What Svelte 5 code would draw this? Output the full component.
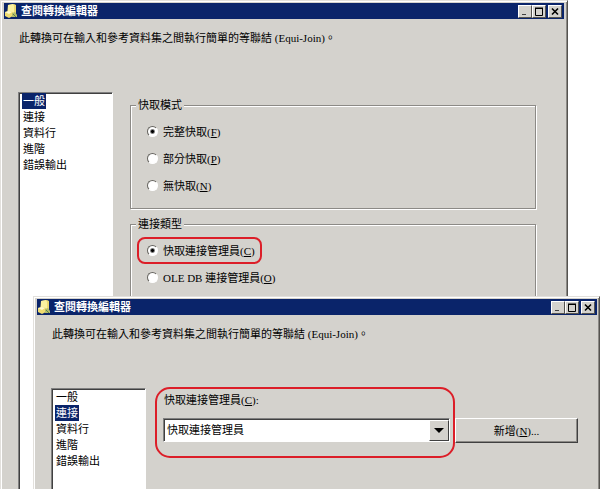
<script lang="ts">
    const pages = ['一般', '連接', '資料行', '進階', '錯誤輸出'];

    const cacheModes = [
        { value: 'full', text: '完整快取', key: 'F' },
        { value: 'partial', text: '部分快取', key: 'P' },
        { value: 'none', text: '無快取', key: 'N' },
    ];

    const connectionTypes = [
        { value: 'cache', text: '快取連接管理員', key: 'C' },
        { value: 'oledb', text: 'OLE DB 連接管理員', key: 'O' },
    ];

    let cacheMode = $state('full');
    let connectionType = $state('cache');
    let backPage = $state('一般');
    let frontPage = $state('連接');
    let manager = $state('快取連接管理員');
</script>

{#snippet titleBar()}
    <header class="title-bar">
        <svg class="app-icon" viewBox="0 0 14 14" aria-hidden="true">
            <path d="M4 1L10 0L12 1V10L9 12L3 11Z" fill="#ecd970" />
            <path d="M4 1L9 0L10 2V9L4 10Z" fill="#fbf2a0" />
            <path d="M1 8L5 7L9 8V12L5 14L1 12Z" fill="#f0dc70" />
            <path d="M1 8L5 7L8 8L5 10Z" fill="#fffbd0" />
            <path d="M8 9L11 8L13 11V13H8Z" fill="#b4bc68" />
            <path d="M9 10L12 13" fill="none" stroke="#5c8050" />
        </svg>
        <h1>查閱轉換編輯器</h1>
        <button class="caption" aria-label="最小化">
            <svg viewBox="0 0 10 9"><path d="M2 7.5H6" stroke="#404040" /></svg>
        </button>
        <button class="caption" aria-label="最大化">
            <svg viewBox="0 0 10 9"><path d="M1.5 1V8.5H8.5V1M1 1H9" fill="none" stroke="#000" /><path d="M1 1.5H9" stroke="#000" /></svg>
        </button>
        <button class="caption close" aria-label="關閉">
            <svg viewBox="0 0 10 9"><path d="M2 1.5L8 7.5M8 1.5L2 7.5" stroke="#000" stroke-width="1.6" /></svg>
        </button>
    </header>
    <p class="intro">此轉換可在輸入和參考資料集之間執行簡單的等聯結 (Equi-Join)。</p>
{/snippet}

{#snippet pageList(current: string, select: (page: string) => void)}
    <nav class="pages">
        {#each pages as page}
            <button class:selected={page === current} onclick={() => select(page)}>{page}</button>
        {/each}
    </nav>
{/snippet}

<main class="desktop">
    <section class="window back">
        {@render titleBar()}
        <div class="body">
            {@render pageList(backPage, (page) => (backPage = page))}
            <div class="groups">
                <fieldset>
                    <legend>快取模式</legend>
                    {#each cacheModes as mode}
                        <label class="choice">
                            <input type="radio" name="mode" value={mode.value} bind:group={cacheMode} />
                            <span>{mode.text}(<u>{mode.key}</u>)</span>
                        </label>
                    {/each}
                </fieldset>
                <fieldset>
                    <legend>連接類型</legend>
                    {#each connectionTypes as type}
                        <label class="choice" class:marked={type.value === 'cache'}>
                            <input type="radio" name="type" value={type.value} bind:group={connectionType} />
                            <span>{type.text}(<u>{type.key}</u>)</span>
                        </label>
                    {/each}
                </fieldset>
            </div>
        </div>
    </section>

    <section class="window front">
        {@render titleBar()}
        <div class="body">
            {@render pageList(frontPage, (page) => (frontPage = page))}
            <div class="connection">
                <div class="manager">
                    <label for="manager">快取連接管理員(<u>C</u>):</label>
                    <div class="combo">
                        <select id="manager" bind:value={manager}>
                            <option>快取連接管理員</option>
                        </select>
                        <span class="arrow">
                            <svg viewBox="0 0 10 5"><path d="M0 0H10L5 5Z" fill="#000" /></svg>
                        </span>
                    </div>
                </div>
                <button class="new">新增(<u>N</u>)...</button>
            </div>
        </div>
    </section>
</main>

<style>
    :global(body) {
        margin: 0;
        background: #fff;
    }

    .desktop {
        position: relative;
        height: 100vh;
        overflow: hidden;
        font-family: "Liberation Serif", "Noto Sans CJK TC", serif;
        font-size: 11px;
        line-height: 16px;
        color: #000;
    }

    .desktop button,
    .desktop select {
        font: inherit;
        color: inherit;
        border-radius: 0;
        margin: 0;
    }

    .window {
        position: absolute;
        box-sizing: border-box;
        display: flex;
        flex-direction: column;
        background: #d4d2cd;
        border: 1px solid #e2e0dc;
        border-right-color: #55534f;
        border-bottom: none;
        box-shadow: inset 1px 1px #fff, inset -1px 0 #8c8a86;
    }

    .back {
        top: 0;
        bottom: 0;
        left: 0;
        right: 32px;
        padding: 2px 3px 0;
    }

    .front {
        top: 296px;
        bottom: 0;
        left: 33px;
        right: 0;
        padding: 2px 2px 0 3px;
    }

    .title-bar {
        display: flex;
        align-items: center;
        height: 16px;
        padding-right: 2px;
        background: #0a246a;
        color: #fff;
    }

    .title-bar h1 {
        flex: 1;
        margin: 0 0 0 3px;
        font-size: 11px;
        line-height: 16px;
        font-weight: bold;
    }

    .app-icon {
        width: 14px;
        height: 14px;
    }

    .desktop .caption {
        display: flex;
        width: 14px;
        height: 13px;
        padding: 1px;
        background: #d4d2cd;
        border: 1px solid #fff;
        border-right-color: #55534f;
        border-bottom-color: #55534f;
    }

    .desktop .close {
        margin-left: 2px;
    }

    .caption svg {
        width: 10px;
        height: 9px;
    }

    .intro {
        margin: 11px 0 0 15px;
        white-space: nowrap;
    }

    .body {
        flex: 1;
        display: flex;
        min-height: 0;
        margin: 46px 0 0 14px;
    }

    .pages {
        flex: none;
        box-sizing: border-box;
        width: 95px;
        padding: 0 2px;
        background: #fff;
        border: 1px solid #808080;
        border-right-color: #fff;
        border-bottom: none;
        box-shadow: inset 1px 1px #404040;
    }

    .desktop .pages button {
        display: block;
        padding: 0 1px;
        margin-left: 1px;
        background: none;
        border: none;
    }

    .desktop .pages button.selected {
        background: #0a246a;
        color: #fff;
    }

    .groups {
        flex: 1;
        display: flex;
        flex-direction: column;
        gap: 7px;
        margin: 5px 28px 0 17px;
    }

    fieldset {
        margin: 0;
        padding: 5px 8px 9px;
        min-width: 0;
        border: 1px solid #8c8a86;
        box-shadow: 1px 1px #fff, inset 1px 1px #fff;
    }

    legend {
        padding: 0 2px;
        margin-left: -3px;
        background: #d4d2cd;
    }

    .choice {
        display: flex;
        align-items: center;
        gap: 5px;
        width: fit-content;
        height: 27px;
        padding: 0 8px;
        box-sizing: border-box;
    }

    .choice.marked {
        margin-left: -2px;
        padding-right: 5px;
        border: 2px solid #dc1e28;
        border-radius: 8px;
    }

    input[type="radio"] {
        appearance: none;
        box-sizing: border-box;
        width: 11px;
        height: 11px;
        margin: 0;
        border: 1px solid #66645f;
        border-right-color: #fff;
        border-bottom-color: #fff;
        border-radius: 50%;
        background: #fff;
    }

    input[type="radio"]:checked {
        background: radial-gradient(circle, #000 1px, #fff 3px);
    }

    .connection {
        flex: 1;
        display: flex;
        align-items: flex-start;
        margin: -1px 19px 0 9px;
    }

    .manager {
        flex: 1;
        box-sizing: border-box;
        height: 71px;
        padding: 3px 3px 0 6px;
        border: 2px solid #dc1e28;
        border-radius: 15px;
    }

    .manager label {
        display: block;
        padding-left: 1px;
    }

    .combo {
        display: flex;
        box-sizing: border-box;
        height: 24px;
        margin-top: 10px;
        background: #fff;
        border: 1px solid #808080;
        border-right-color: #fff;
        border-bottom-color: #fff;
        box-shadow: inset 1px 1px #404040;
        position: relative;
    }

    .combo select {
        appearance: none;
        flex: 1;
        padding: 0 24px 0 3px;
        background: none;
        border: none;
        outline: none;
    }

    .arrow {
        position: absolute;
        top: 1px;
        right: 0;
        bottom: 0;
        display: flex;
        align-items: center;
        justify-content: center;
        width: 18px;
        background: #d4d2cd;
        border: 1px solid #fff;
        border-right-color: #404040;
        border-bottom-color: #404040;
        pointer-events: none;
    }

    .arrow svg {
        width: 10px;
        height: 5px;
    }

    .connection .new {
        box-sizing: border-box;
        width: 123px;
        height: 25px;
        padding: 0;
        margin-top: 31px;
        background: #d4d2cd;
        border: 1px solid #fff;
        border-right-color: #404040;
        border-bottom-color: #404040;
        box-shadow: inset -1px -1px #8c8a86;
    }
</style>
